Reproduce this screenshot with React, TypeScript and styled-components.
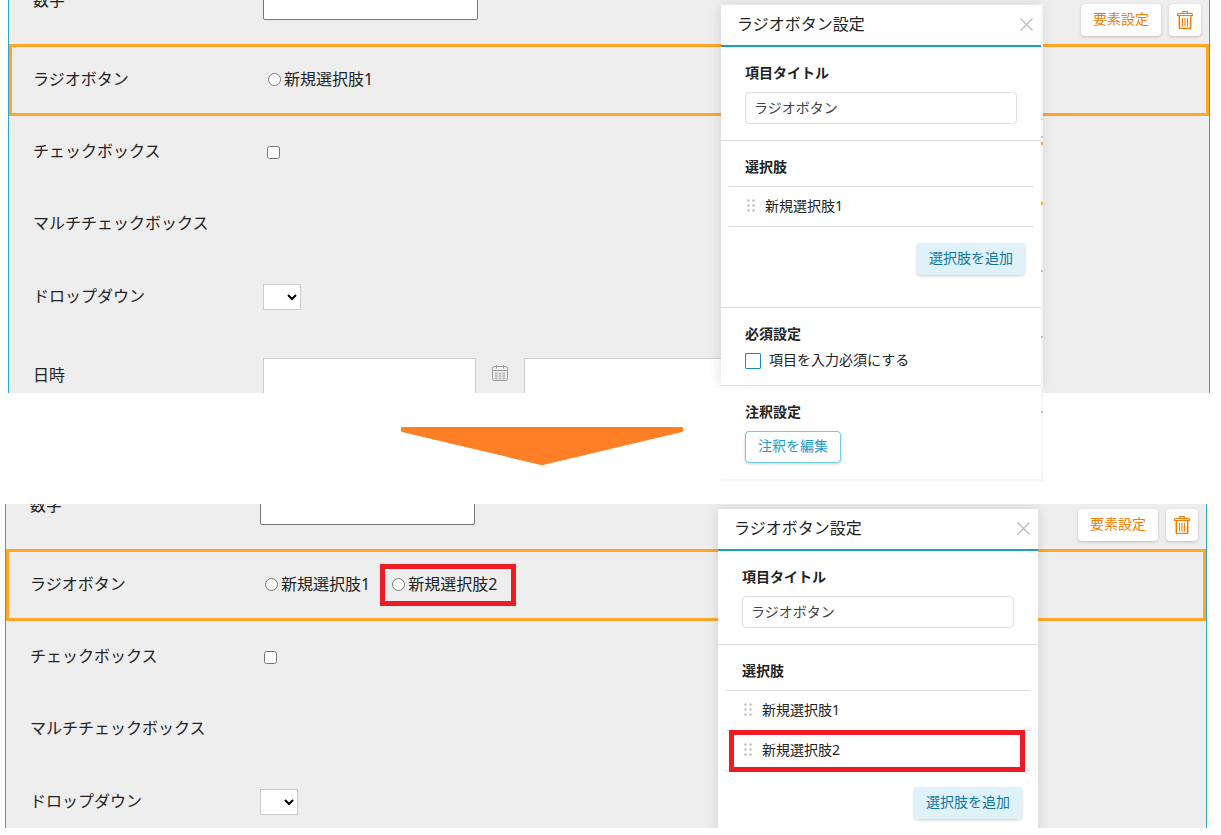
import React, { useId } from "react";
import styled, { createGlobalStyle, css } from "styled-components";

const font = `"Noto Sans", "Noto Sans CJK JP", sans-serif`;

const GlobalStyle = createGlobalStyle`
  *, *::before, *::after { box-sizing: border-box; }
  body {
    margin: 0;
    background: #fff;
    color: #222;
    font-family: ${font};
    font-size: 16px;
    line-height: 24px;
  }
  button, input, select { font-family: ${font}; }
`;

const Page = styled.main`
  display: flex;
  flex-direction: column;
`;

const BoardArea = styled.section<{ $shifted?: boolean }>`
  position: relative;
  z-index: 1;
  margin: ${(p) => (p.$shifted ? "0 14px 0 5px" : "0 11px 0 8px")};
  overflow: ${(p) => (p.$shifted ? "hidden" : "visible")};
`;

const Board = styled.div`
  background: #eee;
  border: solid #2ba6d3;
  border-width: 0 1px;
`;

const Row = styled.div<{ $height: number }>`
  display: grid;
  grid-template-columns: 230px 1fr;
  align-items: start;
  height: ${(p) => p.$height}px;
  padding: 23px 24px 0;
  overflow: hidden;
`;

const SelectedRow = styled(Row)`
  padding: 20px 21px 0;
  border: 3px solid #ffa629;
`;

const ControlRow = styled(Row)`
  padding-top: 24px;
`;

const TopRow = styled(Row)`
  grid-template-columns: 230px 1fr auto;
  grid-template-rows: 100%;
  align-items: end;
  padding: 0 8px 0 24px;
`;

const FieldLabel = styled.label``;

const TopLabel = styled(FieldLabel)`
  padding-bottom: 32px;
`;

const DateLabel = styled(FieldLabel)`
  padding-top: 5px;
`;

const NumberInput = styled.input`
  width: 215px;
  height: 38px;
  margin-bottom: 24px;
  background: #fff;
  border: 1px solid #767676;
  border-radius: 2px;
`;

const Tools = styled.div`
  display: flex;
  gap: 8px;
  padding-bottom: 8px;
`;

const ToolButton = styled.button<{ $square?: boolean }>`
  display: flex;
  align-items: center;
  justify-content: center;
  height: 32px;
  width: ${(p) => (p.$square ? "32px" : "auto")};
  padding: ${(p) => (p.$square ? "0" : "0 12px 2px")};
  border: 0;
  border-radius: 4px;
  background: #fff;
  box-shadow: 0 1px 3px rgba(0, 0, 0, 0.2);
  color: #f57c00;
  font-size: 14px;
  line-height: 20px;
`;

const markFrame = css`
  content: "";
  position: absolute;
  border: 5px solid #ed1c24;
  pointer-events: none;
`;

const RadioGroup = styled.div`
  display: flex;
  gap: 17px;
`;

const RadioLabel = styled.label<{ $marked?: boolean }>`
  position: relative;
  display: flex;
  align-items: center;
  ${(p) =>
    p.$marked &&
    css`
      &::after {
        ${markFrame}
        inset: -8px -19px -10px -7px;
      }
    `}
`;

const Radio = styled.input`
  width: 13px;
  height: 13px;
  margin: 0 3px 0 5px;
`;

const Check = styled.input`
  width: 13px;
  height: 13px;
  margin: 7px 0 0 4px;
`;

const Dropdown = styled.select`
  width: 38px;
  height: 26px;
  background: #fff;
  border: 1px solid #ccc;
  border-radius: 0;
`;

const DateFields = styled.div`
  display: flex;
  align-items: flex-start;
`;

const DateInput = styled.input`
  flex: none;
  width: 213px;
  height: 38px;
  background: #fff;
  border: 1px solid #ccc;
`;

const CalendarButton = styled.button`
  display: flex;
  padding: 7px 16px;
  border: 0;
  background: none;
`;

const Panel = styled.aside<{ $fill?: boolean }>`
  position: absolute;
  top: 5px;
  right: 169px;
  bottom: ${(p) => (p.$fill ? "0" : "auto")};
  width: 320px;
  background: #fff;
  font-size: 14px;
  line-height: 21px;
  box-shadow: ${(p) => (p.$fill ? "none" : "1px 0 0 1px #f5f5f5, 1px 1px 0 1px #f7f7f7")};

  &::before {
    content: "";
    position: absolute;
    inset: 0 0 ${(p) => (p.$fill ? -20 : 91)}px;
    box-shadow: 0 0 12px rgba(0, 0, 0, 0.13);
    clip-path: inset(-12px -12px 0 -12px);
    pointer-events: none;
  }
`;

const PanelEdge = styled.span`
  position: absolute;
  top: -2px;
  bottom: -2px;
  left: 100%;
  width: 2px;
  background: linear-gradient(
    #f5f5f5 116px, #ccc 116px 117px,
    #f5f5f5 117px 133px, #c4c4c4 133px 135px,
    #f5f5f5 135px 139px, #ffa629 139px 142px,
    #f5f5f5 142px 199px, #ffa629 199px 202px,
    #f5f5f5 202px 267px, #c4c4c4 267px 269px,
    #f5f5f5 269px 333px, #c4c4c4 333px 335px,
    #f5f5f5 335px 408px, #c4c4c4 408px 410px,
    #f5f5f5 410px
  );
`;

const PanelHeader = styled.header`
  position: relative;
  display: flex;
  align-items: center;
  justify-content: space-between;
  height: 42px;
  padding: 0 8px 2px 16px;
  border-bottom: 2px solid #1b9dcc;
`;

const PanelTitle = styled.h2`
  margin: 0;
  font-size: 16px;
  font-weight: 400;
  line-height: 24px;
`;

const CloseButton = styled.button`
  display: flex;
  padding: 0;
  border: 0;
  background: none;
`;

const PanelSection = styled.section<{ $tall?: boolean }>`
  position: relative;
  padding: 15px 24px ${(p) => (p.$tall ? 32 : 16)}px;
  & + & {
    border-top: 1px solid #ddd;
  }
`;

const headingStyle = css`
  display: block;
  margin: 0 0 9px;
  color: #222;
  font-size: 14px;
  font-weight: 700;
  line-height: 21px;
`;

const SectionHeading = styled.h3`
  ${headingStyle}
`;

const TitleLabel = styled.label`
  ${headingStyle}
`;

const TitleInput = styled.input`
  display: block;
  width: 100%;
  height: 32px;
  padding: 0 8px 2px;
  border: 1px solid #ddd;
  border-radius: 4px;
  background: #fff;
  color: #444;
  font-size: 14px;
`;

const OptionList = styled.ul`
  margin: 0 -16px 16px;
  padding: 0;
  list-style: none;
  border-top: 1px solid #ddd;
`;

const OptionItem = styled.li<{ $marked?: boolean }>`
  position: relative;
  display: flex;
  align-items: center;
  gap: 9px;
  height: 40px;
  padding: 0 16px 2px 18px;
  border-bottom: 1px solid #ddd;
  ${(p) =>
    p.$marked &&
    css`
      &::after {
        ${markFrame}
        inset: -1px 5px -2px 3px;
      }
    `}
`;

const Actions = styled.div`
  display: flex;
  justify-content: flex-end;
  margin-right: -8px;
`;

const AddButton = styled.button`
  height: 32px;
  padding: 0 12px 2px;
  border: 0;
  border-radius: 4px;
  background: #dff2f9;
  box-shadow: 0 1px 3px rgba(0, 0, 0, 0.2);
  color: #0f75a3;
  font-size: 14px;
  line-height: 20px;
`;

const EditButton = styled(AddButton)`
  display: block;
  width: 96px;
  padding: 0 0 2px;
  border: 1px solid #6fcbe6;
  background: #fff;
  color: #1b9dcc;
`;

const RequiredLabel = styled.label`
  display: flex;
  gap: 8px;
  height: 16px;
  line-height: 14px;
`;

const RequiredCheck = styled.input`
  appearance: none;
  width: 16px;
  height: 16px;
  margin: 0;
  border: 1px solid #1590bf;
  border-radius: 1px;
  background: #fff;
`;

const Transition = styled.div`
  height: 111px;
  padding: 34px 0 0 401px;
`;

const Arrow = styled.svg`
  display: block;
`;

const TrashIcon = () => (
  <svg width="16" height="18" viewBox="0 0 16 18" fill="none" stroke="#f57c00" aria-hidden="true">
    <path d="M5.5 2.500v-1q0-1 1-1h3q1 0 1 1v1" strokeWidth="1.200" />
    <path d="M.6 4.500v-1q0-1 1-1h12.800q1 0 1 1v1z" strokeWidth="1.200" />
    <path d="M2.300 5v11.500q0 1 1 1h9.400q1 0 1-1V5" strokeWidth="1.500" />
    <path d="M5.500 7v8.500M8 7v8.500M10.500 7v8.500" strokeWidth="1.100" />
  </svg>
);

const CalendarIcon = () => (
  <svg width="16" height="17" viewBox="0 0 16 17" fill="none" stroke="#999" aria-hidden="true">
    <rect x=".5" y="1.500" width="15" height="14" rx="2" />
    <path d="M1 5.500h14M4.500 0v3.500M11.500 0v3.500" />
    <path d="M3 8.500h10M3 11h10M3 13.500h10" strokeWidth="1.500" strokeDasharray="2.500 1.250" stroke="#aaa" />
  </svg>
);

const CloseIcon = () => (
  <svg width="13" height="13" viewBox="0 0 13 13" stroke="#bbb" strokeWidth="1.300" aria-hidden="true">
    <path d="M.5.5l12 12M12.500.5l-12 12" />
  </svg>
);

const GripIcon = () => (
  <svg width="9" height="13" viewBox="0 0 9 13" fill="#bbb" aria-hidden="true">
    {[1.5, 6.5, 11.5].map((y) => (
      <React.Fragment key={y}>
        <circle cx="1.5" cy={y} r="1.2" />
        <circle cx="6.5" cy={y} r="1.2" />
      </React.Fragment>
    ))}
  </svg>
);

type FormProps = {
  options: string[];
  markLast?: boolean;
  topHeight: number;
  dropdownHeight: number;
  showDate?: boolean;
};

const FormBoard = ({ options, markLast, topHeight, dropdownHeight, showDate }: FormProps) => {
  const id = useId();
  return (
    <Board>
      <TopRow $height={topHeight}>
        <TopLabel htmlFor={`${id}number`}>数字</TopLabel>
        <NumberInput id={`${id}number`} type="text" />
        <Tools>
          <ToolButton type="button">要素設定</ToolButton>
          <ToolButton type="button" $square aria-label="削除">
            <TrashIcon />
          </ToolButton>
        </Tools>
      </TopRow>
      <SelectedRow $height={72}>
        <span id={`${id}radio`}>ラジオボタン</span>
        <RadioGroup role="radiogroup" aria-labelledby={`${id}radio`}>
          {options.map((option, i) => (
            <RadioLabel key={option} $marked={markLast && i === options.length - 1}>
              <Radio type="radio" name={`${id}choice`} />
              {option}
            </RadioLabel>
          ))}
        </RadioGroup>
      </SelectedRow>
      <Row $height={72}>
        <FieldLabel htmlFor={`${id}check`}>チェックボックス</FieldLabel>
        <div>
          <Check id={`${id}check`} type="checkbox" />
        </div>
      </Row>
      <Row $height={72}>
        <span>マルチチェックボックス</span>
      </Row>
      <ControlRow $height={dropdownHeight}>
        <FieldLabel htmlFor={`${id}select`}>ドロップダウン</FieldLabel>
        <Dropdown id={`${id}select`} />
      </ControlRow>
      {showDate && (
        <ControlRow $height={59}>
          <DateLabel htmlFor={`${id}date`}>日時</DateLabel>
          <DateFields>
            <DateInput id={`${id}date`} type="text" />
            <CalendarButton type="button" aria-label="カレンダー">
              <CalendarIcon />
            </CalendarButton>
            <DateInput type="text" aria-label="時刻" />
          </DateFields>
        </ControlRow>
      )}
    </Board>
  );
};

type PanelProps = { options: string[]; markLast?: boolean; partial?: boolean };

const SettingsPanel = ({ options, markLast, partial }: PanelProps) => {
  const id = useId();
  return (
    <Panel $fill={partial}>
      <PanelHeader>
        <PanelTitle>ラジオボタン設定</PanelTitle>
        <CloseButton type="button" aria-label="閉じる">
          <CloseIcon />
        </CloseButton>
      </PanelHeader>
      <PanelSection>
        <TitleLabel htmlFor={`${id}title`}>項目タイトル</TitleLabel>
        <TitleInput id={`${id}title`} type="text" defaultValue="ラジオボタン" />
      </PanelSection>
      <PanelSection $tall>
        <SectionHeading>選択肢</SectionHeading>
        <OptionList>
          {options.map((option, i) => (
            <OptionItem key={option} $marked={markLast && i === options.length - 1}>
              <GripIcon />
              {option}
            </OptionItem>
          ))}
        </OptionList>
        <Actions>
          <AddButton type="button">選択肢を追加</AddButton>
        </Actions>
      </PanelSection>
      {!partial && (
        <>
          <PanelSection>
            <SectionHeading>必須設定</SectionHeading>
            <RequiredLabel>
              <RequiredCheck type="checkbox" />
              項目を入力必須にする
            </RequiredLabel>
          </PanelSection>
          <PanelSection>
            <SectionHeading>注釈設定</SectionHeading>
            <EditButton type="button">注釈を編集</EditButton>
          </PanelSection>
          <PanelEdge />
        </>
      )}
    </Panel>
  );
};

const before = ["新規選択肢1"];
const after = ["新規選択肢1", "新規選択肢2"];

export default function App() {
  return (
    <Page>
      <GlobalStyle />
      <BoardArea>
        <FormBoard options={before} topHeight={44} dropdownHeight={74} showDate />
        <SettingsPanel options={before} />
      </BoardArea>
      <Transition>
        <Arrow width="282" height="38" viewBox="0 0 282 38" aria-hidden="true">
          <path d="M1 0H281L282 1V4L281 5L144 37.500Q141 38.500 138 37.500L1 5L0 4V1Z" fill="#ff7f27" />
        </Arrow>
      </Transition>
      <BoardArea $shifted>
        <FormBoard options={after} markLast topHeight={45} dropdownHeight={63} />
        <SettingsPanel options={after} markLast partial />
      </BoardArea>
    </Page>
  );
}
